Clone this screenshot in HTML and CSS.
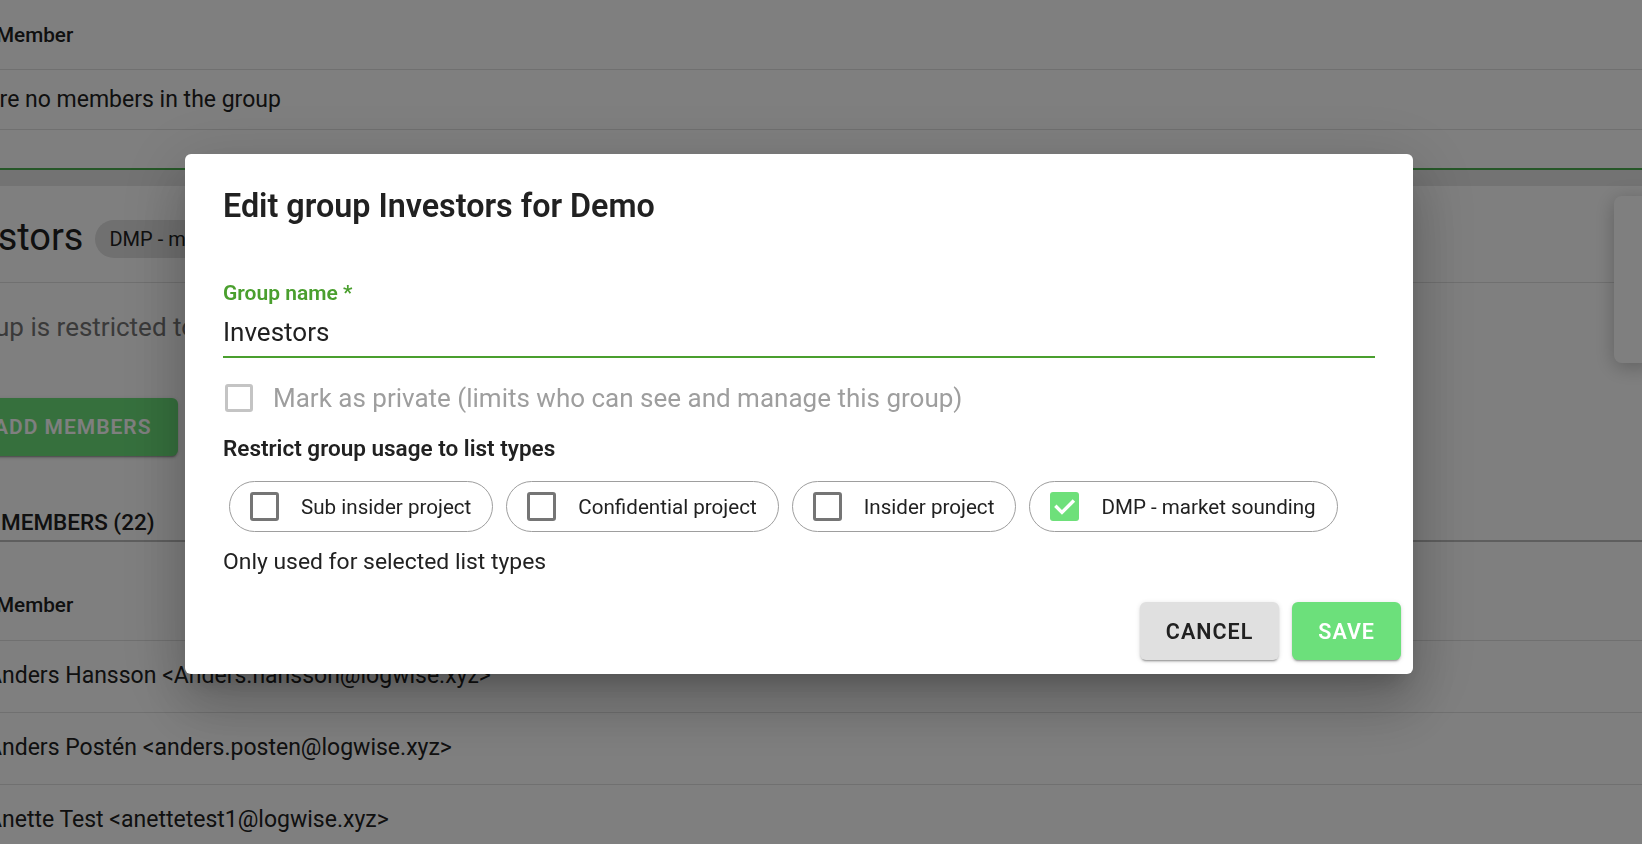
FILE: index.html
```html
<!DOCTYPE html>
<html lang="en">
<head>
<meta charset="utf-8">
<title>Edit group</title>
<link rel="stylesheet" href="styles.css">
</head>
<body>
<div class="page">
  <section class="table top-table">
    <div class="th-row"><span class="th-text">Member</span></div>
    <div class="td-row empty"><span class="empty-text">There are no members in the group</span></div>
  </section>
  <div class="band"></div>
  <div class="main">
    <div class="group-card">
      <div class="group-head">
        <h1 class="group-title">Investors</h1>
        <span class="tag">DMP - market sounding</span>
      </div>
      <p class="restrict-text">This group is restricted to DMP - market sounding</p>
      <button class="add-btn">ADD MEMBERS</button>
    </div>
    <aside class="side-card"></aside>
  </div>
  <div class="tabs"><span class="tab">MEMBERS (22)</span></div>
  <section class="table members-table">
    <div class="th-row tall"><span class="th-text">Member</span></div>
    <div class="td-row"><span class="member">Anders Hansson &lt;Anders.hansson@logwise.xyz&gt;</span></div>
    <div class="td-row"><span class="member">Anders Postén &lt;anders.posten@logwise.xyz&gt;</span></div>
    <div class="td-row"><span class="member">Anette Test &lt;anettetest1@logwise.xyz&gt;</span></div>
  </section>
</div>

<div class="backdrop"></div>

<div class="dialog" role="dialog">
  <h2 class="dialog-title">Edit group Investors for Demo</h2>
  <div class="dialog-content">
    <div class="field">
      <label class="field-label">Group name *</label>
      <div class="field-input">Investors</div>
    </div>
    <div class="private-row">
      <span class="box disabled"></span>
      <span class="private-text">Mark as private (limits who can see and manage this group)</span>
    </div>
    <div class="restrict-label">Restrict group usage to list types</div>
    <div class="chips">
      <div class="chip"><span class="box"></span><span class="chip-text">Sub insider project</span></div>
      <div class="chip"><span class="box"></span><span class="chip-text">Confidential project</span></div>
      <div class="chip"><span class="box"></span><span class="chip-text">Insider project</span></div>
      <div class="chip"><span class="box checked"><svg viewBox="0 0 24 24" width="29" height="29"><path d="M5.4 12.4 L9.9 16.9 L18.8 8" fill="none" stroke="#fff" stroke-width="2.8" stroke-linecap="square"/></svg></span><span class="chip-text">DMP - market sounding</span></div>
    </div>
    <div class="helper">Only used for selected list types</div>
  </div>
  <div class="actions">
    <button class="btn cancel">CANCEL</button>
    <button class="btn save">SAVE</button>
  </div>
</div>
</body>
</html>
```

FILE: styles.css
```css
* { box-sizing: border-box; }
html, body {
  margin: 0;
  padding: 0;
  width: 1642px;
  height: 844px;
  overflow: hidden;
  font-family: Roboto, "Noto Sans", "Liberation Sans", sans-serif;
  color: #212121;
  background: #fff;
}
.page {
  width: 1642px;
  height: 844px;
  overflow: hidden;
  background: #fff;
}
.table { display: flex; flex-direction: column; }
.th-row {
  height: 70px;
  padding-top: 23px;
  border-bottom: 1px solid #e0e0e0;
}
.th-row.tall { height: 99px; padding-top: 51px; }
.th-text {
  display: block;
  margin-left: -4px;
  font-size: 20.7px;
  line-height: 24px;
  font-weight: 500;
}
.td-row {
  height: 72px;
  padding-top: 22px;
  border-bottom: 1px solid #e0e0e0;
}
.td-row.empty { height: 60px; padding-top: 17px; }
.empty-text, .member {
  display: block;
  font-size: 23px;
  line-height: 26px;
  white-space: nowrap;
}
.empty-text { margin-left: -77px; }
.member { margin-left: -13px; }
.top-table { height: 168px; }
.band {
  height: 18px;
  border-top: 2px solid #4caf50;
  background: #e6e6e6;
}
.main {
  display: flex;
  height: 284px;
}
.group-card { flex: 1; min-width: 0; }
.group-head {
  display: flex;
  align-items: center;
  gap: 12px;
  height: 97px;
  padding-top: 29px;
  padding-bottom: 24px;
  border-bottom: 1px solid #e0e0e0;
}
.group-title {
  margin: 0 0 0 -72px;
  font-size: 38px;
  line-height: 44px;
  font-weight: 400;
}
.tag {
  margin-top: 4px;
  height: 38px;
  padding: 0 14px;
  border-radius: 19px;
  background: #e0e0e0;
  font-size: 20px;
  line-height: 38px;
  white-space: nowrap;
}
.restrict-text {
  margin: 30px 0 0 -99px;
  font-size: 26px;
  line-height: 28px;
  color: #757575;
  white-space: nowrap;
}
.add-btn {
  display: block;
  margin: 57px 0 0 -32px;
  height: 58px;
  padding: 0 26px;
  border: 0;
  border-radius: 6px;
  background: #6ce07b;
  color: #fff;
  font-family: inherit;
  font-size: 21px;
  font-weight: 600;
  letter-spacing: 1px;
  box-shadow: 0 3px 1px -2px rgba(0,0,0,.2), 0 2px 2px 0 rgba(0,0,0,.14), 0 1px 5px 0 rgba(0,0,0,.12);
}
.side-card {
  width: 40px;
  margin: 10px -12px 0 0;
  height: 167px;
  background: #fff;
  border-radius: 8px;
  box-shadow: 0 4px 20px rgba(0,0,0,.25);
}
.tabs {
  height: 72px;
  padding-top: 39px;
  border-bottom: 2px solid #bdbdbd;
}
.tab {
  display: block;
  margin-left: 1px;
  font-size: 22.5px;
  line-height: 26px;
  font-weight: 500;
}
.backdrop {
  position: fixed;
  inset: 0;
  background: rgba(0,0,0,.5);
}
.dialog {
  position: fixed;
  left: 185px;
  top: 154px;
  width: 1228px;
  background: #fff;
  border-radius: 6px;
  box-shadow: 0 16px 22px -10px rgba(0,0,0,.2), 0 35px 55px 4px rgba(0,0,0,.14), 0 13px 67px 12px rgba(0,0,0,.12);
}
.dialog-title {
  margin: 0;
  padding: 32px 38px 0;
  font-size: 32.3px;
  line-height: 40px;
  font-weight: 600;
  color: #212121;
}
.dialog-content { padding: 0 38px; }
.field { margin-top: 55px; }
.field-label {
  display: block;
  font-size: 21px;
  line-height: 24px;
  font-weight: 600;
  color: #4a9f2e;
}
.field-input {
  margin-top: 13px;
  font-size: 26px;
  line-height: 28px;
  padding-bottom: 10px;
  border-bottom: 2.5px solid #4a9f2e;
}
.private-row {
  display: flex;
  align-items: center;
  gap: 20px;
  height: 44px;
  margin: 18px 0 0 2px;
}
.private-text {
  font-size: 26px;
  line-height: 28px;
  color: #9e9e9e;
}
.box {
  display: block;
  flex-shrink: 0;
  width: 29px;
  height: 29px;
  border: 3px solid #757575;
  border-radius: 3px;
}
.box.disabled {
  width: 28px;
  height: 28px;
  border-color: #c4c4c4;
}
.box.checked {
  border: 0;
  background: #6ee07a;
}
.box.checked svg { display: block; }
.restrict-label {
  margin-top: 15px;
  font-size: 22.5px;
  line-height: 26px;
  font-weight: 600;
}
.chips {
  display: flex;
  gap: 13px;
  margin: 20px 0 0 6px;
}
.chip {
  display: flex;
  align-items: center;
  gap: 22px;
  height: 51px;
  padding: 0 21px 0 20px;
  border: 1px solid #9e9e9e;
  border-radius: 26px;
}
.chip-text {
  font-size: 20.6px;
  line-height: 26px;
  white-space: nowrap;
}
.helper {
  margin-top: 17px;
  font-size: 22.9px;
  line-height: 26px;
}
.actions {
  display: flex;
  justify-content: flex-end;
  gap: 13px;
  padding: 27px 12px 14px;
}
.btn {
  height: 58px;
  padding: 0 26px;
  border: 0;
  border-radius: 6px;
  font-family: inherit;
  font-size: 21.5px;
  font-weight: 600;
  letter-spacing: 1px;
  box-shadow: 0 3px 1px -2px rgba(0,0,0,.2), 0 2px 2px 0 rgba(0,0,0,.14), 0 1px 5px 0 rgba(0,0,0,.12);
}
.cancel { background: #e0e0e0; color: #212121; }
.save { background: #6ce07b; color: #fff; }
```
